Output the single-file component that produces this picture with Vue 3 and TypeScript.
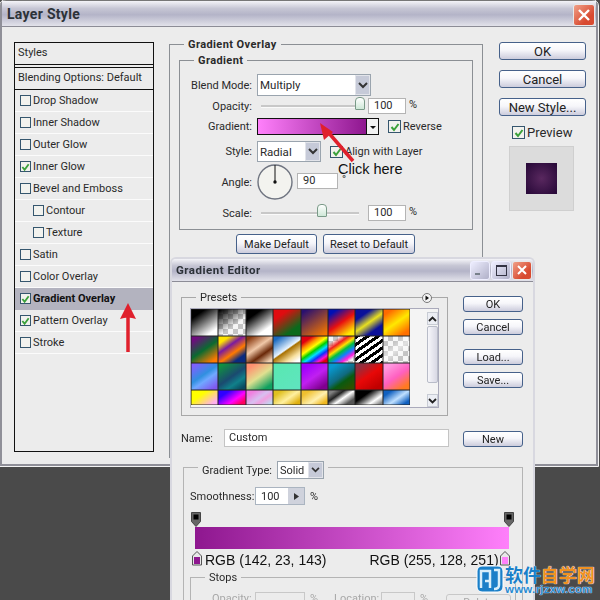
<script setup lang="ts">
interface StyleRow {
  label: string
  checked?: boolean
  nested?: boolean
  active?: boolean
}

const styleRows: StyleRow[] = [
  { label: 'Drop Shadow' },
  { label: 'Inner Shadow' },
  { label: 'Outer Glow' },
  { label: 'Inner Glow', checked: true },
  { label: 'Bevel and Emboss' },
  { label: 'Contour', nested: true },
  { label: 'Texture', nested: true },
  { label: 'Satin' },
  { label: 'Color Overlay' },
  { label: 'Gradient Overlay', checked: true, active: true },
  { label: 'Pattern Overlay', checked: true },
  { label: 'Stroke' },
]

const checker = 'repeating-conic-gradient(#c4c4c4 0 25%, #f6f6f6 0 50%) 0 0 / 10px 10px'

const swatches: string[] = [
  'linear-gradient(145deg,#000 22%,#fff 82%)',
  `linear-gradient(145deg,#000 5%,transparent 60%),${checker}`,
  'linear-gradient(145deg,#000 25%,#fff 75%)',
  'linear-gradient(145deg,#e00c10 25%,#0a6a1c 75%)',
  'linear-gradient(145deg,#2a1070 10%,#f07400 90%)',
  'linear-gradient(145deg,#0010b4 15%,#e81010 50%,#ffe800 85%)',
  'linear-gradient(145deg,#0a109a 25%,#e8e020 50%,#0a109a 75%)',
  'linear-gradient(145deg,#ff6a00 15%,#ffe800 50%,#ff7000 85%)',

  'linear-gradient(145deg,#700a80 12%,#0a6a30 50%,#ff7a00 88%)',
  'linear-gradient(145deg,#ffe400 18%,#7a1aa0 38%,#ff7a00 60%,#0a2a80 80%)',
  'linear-gradient(145deg,#8a3a10 10%,#f0c8a8 42%,#6a2808 66%,#f0d0b0 90%)',
  'linear-gradient(145deg,#1a6ac0 12%,#e8f4ff 48%,#a87000 52%,#f8e0a0 75%,#fff 90%)',
  'linear-gradient(145deg,#e00010 18%,#ff9000 30%,#ffff00 42%,#00d000 52%,#00e0ff 62%,#1030ff 72%,#ff10d0 82%,#e00010 90%)',
  `linear-gradient(145deg,transparent 18%,#f02020 32%,#ffe000 44%,#00c040 54%,#1080ff 66%,#ff20e0 78%,transparent 88%),${checker}`,
  'repeating-linear-gradient(145deg,#000 0 3px,#fff 3px 6px)',
  `linear-gradient(145deg,transparent 30%,rgba(255,255,255,.5) 50%,transparent 70%),${checker}`,

  'linear-gradient(145deg,#8060ff 10%,#3090e0 45%,#70a8ff 60%,#8058f0 90%)',
  'linear-gradient(145deg,#109040 10%,#1a4a70 50%,#10808a 70%,#0a4a60 90%)',
  'linear-gradient(145deg,#ff9070 15%,#e0e090 50%,#10a060 85%)',
  'linear-gradient(145deg,#58e8b0,#60e4c0)',
  'linear-gradient(145deg,#a000ff 15%,#c020f0 50%,#800090 85%)',
  'linear-gradient(145deg,#0898d0 15%,#106a80 50%,#0a5a10 65%,#305000 90%)',
  'linear-gradient(145deg,#903040 15%,#e80808 48%,#c00000 85%)',
  'linear-gradient(145deg,#ff98e0 15%,#ff60c0 50%,#ff7a20 85%)',

  'linear-gradient(145deg,#ffff00 35%,#ffb0f0 85%)',
  'linear-gradient(145deg,#3000ff 25%,#ff00ff 62%,#ff0060 85%)',
  `linear-gradient(145deg,#f080e0 20%,#d8c0f0 50%,#f0a0e0 65%,#c0d8f0 90%)`,
  'linear-gradient(145deg,#e0c020 20%,#fff0a0 55%,#e0b010 85%)',
  'linear-gradient(145deg,#f0c030 20%,#fff0b0 58%,#f0b820 85%)',
  'linear-gradient(145deg,#808080 15%,#222 35%,#fff 55%,#555 80%)',
  'linear-gradient(145deg,#000 35%,#fff 70%,#888 90%)',
  'linear-gradient(145deg,#1060c0 20%,#c0e0ff 55%,#1060c0 85%)',
]
</script>

<template>
  <div class="desktop">
    <!-- Layer Style window -->
    <section class="window layer-win">
      <header class="titlebar">
        <span class="title">Layer Style</span>
        <span class="close big">
          <svg width="14" height="14" viewBox="0 0 14 14"><path d="M2 2l10 10M12 2L2 12" stroke="#fff" stroke-width="2.4" /></svg>
        </span>
      </header>
      <div class="layer-body">
        <aside class="style-list">
          <div class="list-head">Styles</div>
          <div class="list-blend">Blending Options: Default</div>
          <div
            v-for="row in styleRows"
            :key="row.label"
            class="list-row"
            :class="{ nested: row.nested, active: row.active }"
          >
            <span class="check">
              <svg v-if="row.checked" width="10" height="10" viewBox="0 0 10 10"><path d="M1.5 5l2.5 3 4.5-6" fill="none" stroke="#3aa13a" stroke-width="2" /></svg>
            </span>
            {{ row.label }}
          </div>
        </aside>

        <div class="overlay-group">
          <span class="legend strong">Gradient Overlay</span>
          <div class="gradient-group">
            <span class="legend strong">Gradient</span>
            <div class="form-row r-blend">
              <label>Blend Mode:</label>
              <div class="select w-blend">
                <span>Multiply</span>
                <span class="drop"><svg width="10" height="7" viewBox="0 0 10 7"><path d="M1 1l4 4 4-4" fill="none" stroke="#333" stroke-width="2" /></svg></span>
              </div>
            </div>
            <div class="form-row r-opacity">
              <label>Opacity:</label>
              <div class="slider w-slide1"><i class="thumb" style="left: 94px"></i></div>
              <span class="num">100</span>
              <span class="pct">%</span>
            </div>
            <div class="form-row r-gradient">
              <label>Gradient:</label>
              <div class="grad-field">
                <span class="grad-fill"></span>
                <span class="grad-arrow"></span>
              </div>
              <span class="check reverse">
                <svg width="10" height="10" viewBox="0 0 10 10"><path d="M1.5 5l2.5 3 4.5-6" fill="none" stroke="#3aa13a" stroke-width="2" /></svg>
              </span>
              <span class="small">Reverse</span>
            </div>
            <div class="form-row r-style">
              <label>Style:</label>
              <div class="select w-style">
                <span>Radial</span>
                <span class="drop"><svg width="10" height="7" viewBox="0 0 10 7"><path d="M1 1l4 4 4-4" fill="none" stroke="#333" stroke-width="2" /></svg></span>
              </div>
              <span class="check align">
                <svg width="10" height="10" viewBox="0 0 10 10"><path d="M1.5 5l2.5 3 4.5-6" fill="none" stroke="#3aa13a" stroke-width="2" /></svg>
              </span>
              <span class="small">Align with Layer</span>
            </div>
            <div class="form-row r-angle">
              <label>Angle:</label>
              <svg class="dial" width="36" height="36" viewBox="0 0 36 36">
                <circle cx="18" cy="18" r="17" fill="#f3f3ef" stroke="#6f7480" stroke-width="1.4" />
                <path d="M18 18V1" stroke="#111" stroke-width="1" />
                <circle cx="18" cy="18" r="1.7" fill="#111" />
              </svg>
              <span class="num angle">90</span>
              <span class="deg">°</span>
            </div>
            <div class="form-row r-scale">
              <label>Scale:</label>
              <div class="slider w-slide2"><i class="thumb" style="left: 56px"></i></div>
              <span class="num">100</span>
              <span class="pct">%</span>
            </div>
          </div>
          <div class="default-btns">
            <button class="btn make" type="button">Make Default</button>
            <button class="btn reset" type="button">Reset to Default</button>
          </div>
        </div>

        <div class="side-col">
          <button class="btn side" type="button">OK</button>
          <button class="btn side" type="button">Cancel</button>
          <button class="btn side" type="button">New Style...</button>
          <div class="preview-row">
            <span class="check">
              <svg width="10" height="10" viewBox="0 0 10 10"><path d="M1.5 5l2.5 3 4.5-6" fill="none" stroke="#3aa13a" stroke-width="2" /></svg>
            </span>
            Preview
          </div>
          <div class="preview-box"><span class="preview-inner"></span></div>
        </div>
      </div>
    </section>

    <!-- Gradient Editor window -->
    <section class="window editor-win">
      <header class="titlebar small-bar">
        <span class="title">Gradient Editor</span>
        <span class="win-btns">
          <span class="wbtn"><i class="min"></i></span>
          <span class="wbtn"><i class="max"></i></span>
          <span class="close">
            <svg width="12" height="12" viewBox="0 0 12 12"><path d="M2 2l8 8M10 2l-8 8" stroke="#fff" stroke-width="2" /></svg>
          </span>
        </span>
      </header>
      <div class="editor-body">
        <div class="editor-top">
          <div class="presets">
            <span class="legend">Presets</span>
            <svg class="round-btn" width="10" height="10" viewBox="0 0 10 10">
              <circle cx="5" cy="5" r="4.500" fill="#f4f4f4" stroke="#777" />
              <path d="M3.500 2.500L7 5 3.500 7.500z" fill="#111" />
            </svg>
            <div class="preset-inner">
              <div class="swatch-grid">
                <span v-for="(bg, i) in swatches" :key="i" class="swatch" :style="{ background: bg }"></span>
              </div>
              <div class="scroll">
                <span class="scroll-btn"><svg width="9" height="6" viewBox="0 0 9 6"><path d="M1 5l3.5-3.5L8 5" fill="none" stroke="#222" stroke-width="1.8" /></svg></span>
                <span class="scroll-thumb"></span>
                <span class="scroll-btn down"><svg width="9" height="6" viewBox="0 0 9 6"><path d="M1 1l3.5 3.5L8 1" fill="none" stroke="#222" stroke-width="1.8" /></svg></span>
              </div>
            </div>
          </div>
          <div class="editor-side">
            <button class="btn eside" type="button">OK</button>
            <button class="btn eside" type="button">Cancel</button>
            <button class="btn eside load" type="button">Load...</button>
            <button class="btn eside" type="button">Save...</button>
          </div>
        </div>

        <div class="name-row">
          <label>Name:</label>
          <span class="name-input">Custom</span>
          <button class="btn eside new" type="button">New</button>
        </div>

        <div class="type-group">
          <div class="type-legend">
            <span>Gradient Type:</span>
            <div class="select w-type">
              <span>Solid</span>
              <span class="drop"><svg width="9" height="6" viewBox="0 0 10 7"><path d="M1 1l4 4 4-4" fill="none" stroke="#333" stroke-width="2" /></svg></span>
            </div>
          </div>
          <div class="smooth-row">
            <span class="smooth-label">Smoothness:</span>
            <div class="smooth-input">
              <span>100</span>
              <span class="stepper"><svg width="5" height="7" viewBox="0 0 5 7"><path d="M0 0l5 3.5L0 7z" fill="#333" /></svg></span>
            </div>
            <span>%</span>
          </div>
          <div class="stops-top">
            <svg v-for="n in 2" :key="n" width="10" height="15" viewBox="0 0 10 15"><path d="M.5.5h9v9L5 14.5.5 9.500z" fill="#666" stroke="#444" /><rect x="2.500" y="2.500" width="5" height="5" fill="#000" /></svg>
          </div>
          <div class="grad-bar"></div>
          <div class="stops-bottom">
            <svg width="10" height="15" viewBox="0 0 10 15"><path d="M5 .5L9.500 5v9h-9V5z" fill="#e8e8e8" stroke="#555" /><rect x="2" y="6" width="6" height="7" fill="#8e178f" /></svg>
            <span class="rgb">RGB (142, 23, 143)</span>
            <span class="rgb right">RGB (255, 128, 251)</span>
            <svg width="10" height="15" viewBox="0 0 10 15"><path d="M5 .5L9.500 5v9h-9V5z" fill="#e8e8e8" stroke="#555" /><rect x="2" y="6" width="6" height="7" fill="#ff80fb" /></svg>
          </div>
          <div class="stops-group">
            <span class="legend">Stops</span>
            <div class="stops-row">
              <span class="opa">Opacity:</span>
              <span class="dis-input o"></span>
              <span class="dis-pct">%</span>
              <span class="loc">Location:</span>
              <span class="dis-input l"></span>
              <span class="dis-pct">%</span>
              <span class="delete">Delete</span>
            </div>
          </div>
        </div>
      </div>
    </section>

    <!-- annotations drawn over the windows -->
    <span class="click-here">Click here</span>
    <svg class="arrows" width="600" height="600" viewBox="0 0 600 600">
      <path d="M353 161L328 132" stroke="#e0202c" stroke-width="3.500" />
      <path d="M320 123l13 9-9 8z" fill="#e0202c" />
      <path d="M128 352V316" stroke="#e0202c" stroke-width="3.500" />
      <path d="M128 303l8 16q-8-3-16 0z" fill="#e0202c" />
    </svg>

    <div class="watermark">
      <svg width="28" height="28" viewBox="0 0 28 28">
        <rect x="1" y="1" width="26" height="26" rx="5" fill="#1a7fc8" stroke="#fff" />
        <path d="M5 23V6h9v10H9M14 23V11M18 5h5v15c0 3-2 4-5 4" fill="none" stroke="#d8eefa" stroke-width="2.500" />
      </svg>
      <div class="wm-text">
        <div class="wm-name"><span class="blue">软件</span><span class="orange">自学网</span></div>
        <div class="wm-url">www.rjzxw.com</div>
      </div>
    </div>
  </div>
</template>

<style scoped>
.desktop {
  position: relative;
  width: 600px;
  height: 600px;
  overflow: hidden;
  background: #4a4a4a;
  font-family: Roboto, "Liberation Sans", Arial, sans-serif;
  font-size: 11px;
  letter-spacing: 0;
  color: #2a2a2a;
}

.window {
  position: absolute;
  box-sizing: border-box;
  background: #ececec;
}

.layer-win {
  left: 0;
  top: 0;
  width: 598px;
  height: 466px;
  border: 2px solid #8f8f98;
  border-top: 1px solid #777;
  border-radius: 6px 6px 0 0;
  outline: 1px solid #f4f4f4;
}

.editor-win {
  left: 170px;
  top: 257px;
  width: 365px;
  height: 343px;
  border: 2px solid #d8d8e0;
  border-bottom: 0;
  border-radius: 6px 6px 0 0;
  overflow: hidden;
  filter: blur(0.35px);
}

.titlebar {
  box-sizing: border-box;
  height: 26px;
  display: flex;
  align-items: center;
  justify-content: space-between;
  padding: 0 1px 0 5px;
  border-bottom: 1px solid #8c8c96;
  background: linear-gradient(#f4f4f8 0, #c6c6d4 30%, #b4b4c8 55%, #e2e2ea 100%);
}

.small-bar {
  height: 23px;
  padding: 0 1px 0 4px;
}

.title {
  font-size: 14px;
  font-weight: 700;
  letter-spacing: 0.3px;
  color: #2c3238;
}

.small-bar .title {
  font-size: 11.5px;
  letter-spacing: 0.5px;
}

.close {
  width: 18px;
  height: 17px;
  display: flex;
  align-items: center;
  justify-content: center;
  border-radius: 3px;
  border: 1px solid #e8e8e8;
  background: linear-gradient(135deg, #f0a088, #d84a30 70%);
}

.close.big {
  width: 20px;
  height: 20px;
  margin-top: 3px;
}

.win-btns {
  display: flex;
  gap: 1px;
}

.wbtn {
  width: 18px;
  height: 17px;
  display: flex;
  align-items: center;
  justify-content: center;
  border-radius: 3px;
  border: 1px solid #eef;
  background: linear-gradient(135deg, #eef, #b0b0c8);
}

.wbtn .min {
  width: 5px;
  height: 2px;
  margin: 7px 6px 0 0;
  background: #77808a;
}

.wbtn .max {
  width: 9px;
  height: 8px;
  border: 1px solid #334;
  border-top-width: 2px;
}

.layer-body {
  display: flex;
  align-items: flex-start;
  padding: 15px 0 0 12px;
}

/* left column with the effect list */
.style-list {
  box-sizing: border-box;
  width: 140px;
  height: 410px;
  flex: none;
  border: 1px solid #111;
}

.list-head {
  height: 21px;
  line-height: 19px;
  padding-left: 3px;
  border-bottom: 1px solid #111;
}

.list-blend {
  height: 21px;
  line-height: 20px;
  padding-left: 3px;
  border-top: 1px solid #111;
  border-bottom: 1px solid #111;
  margin-top: 2px;
}

.list-row {
  box-sizing: border-box;
  height: 22px;
  display: flex;
  align-items: center;
  gap: 2px;
  padding-left: 5px;
  border-bottom: 1px solid #fbfbfb;
}

.list-row.nested {
  padding-left: 18px;
}

.list-row.active {
  background: #b3b3bf;
  font-weight: 700;
  color: #111;
  border-bottom-color: #b3b3bf;
}

.check {
  box-sizing: border-box;
  width: 11px;
  height: 11px;
  flex: none;
  display: inline-flex;
  align-items: center;
  justify-content: center;
  border: 1px solid #35566e;
  background: #f2f2ee;
}

.legend {
  position: absolute;
  top: -7px;
  left: 14px;
  padding: 0 4px;
  background: #ececec;
  line-height: 13px;
}

.legend.strong {
  font-weight: 700;
  letter-spacing: 0.4px;
}

.overlay-group {
  position: relative;
  box-sizing: border-box;
  width: 314px;
  height: 414px;
  flex: none;
  margin: 2px 0 0 15px;
  padding: 15px 9px 0;
  border: 1px solid #8b8f94;
  border-bottom: 0;
}

.gradient-group {
  position: relative;
  box-sizing: border-box;
  height: 170px;
  border: 1px solid #8b8f94;
  padding-top: 13px;
}

.form-row {
  display: flex;
  align-items: center;
}

.form-row label {
  width: 72px;
  flex: none;
  text-align: right;
  margin-right: 5px;
}

.r-blend { height: 22px; }
.r-opacity { height: 16px; margin-top: 2px; }
.r-gradient { height: 17px; margin-top: 4px; }
.r-style { height: 21px; margin-top: 6px; }
.r-angle { height: 36px; margin-top: 2px; }
.r-scale { height: 16px; margin-top: 5px; }

.select {
  box-sizing: border-box;
  display: flex;
  align-items: center;
  justify-content: space-between;
  height: 100%;
  padding-left: 2px;
  background: #fff;
  border: 1px solid #9aa4ae;
}

.w-blend { width: 114px; font-size: 11.5px; }
.w-style { width: 64px; font-size: 11.5px; }

.drop {
  width: 15px;
  align-self: stretch;
  display: flex;
  align-items: center;
  justify-content: center;
  background: #c6cad8;
  box-shadow: inset 0 0 0 1px #e2e4ea;
}

.slider {
  position: relative;
  height: 2px;
  margin-left: 4px;
  background: #c8c8c8;
  border-bottom: 1px solid #fafafa;
}

.w-slide1 { width: 102px; margin-right: 5px; }
.w-slide2 { width: 98px; margin-right: 9px; }

.thumb {
  position: absolute;
  top: -8px;
  width: 8px;
  height: 11px;
  border: 1px solid #7a9a88;
  border-radius: 4px 4px 1px 1px;
  background: linear-gradient(#fff, #cfe8d8);
}

.num {
  box-sizing: border-box;
  width: 38px;
  height: 16px;
  line-height: 14px;
  padding-left: 5px;
  background: #fff;
  border: 1px solid #b4b4b4;
}

.pct {
  margin: -4px 0 0 3px;
}

.grad-field {
  box-sizing: border-box;
  width: 122px;
  height: 100%;
  display: flex;
  flex: none;
  border: 1px solid #111;
}

.grad-fill {
  flex: 1;
  background: linear-gradient(90deg, #ff80fb, #8e178f);
}

.grad-arrow {
  position: relative;
  width: 11px;
  background: #f2f2f2;
  border-left: 1px solid #111;
}

.grad-arrow::after {
  content: "";
  position: absolute;
  left: 3px;
  top: 7px;
  border: 3px solid transparent;
  border-top: 3px solid #111;
}

.reverse {
  margin: 0 2px 0 9px;
  width: 13px;
  height: 13px;
}

.small {
  font-size: 11px;
}

.align {
  margin: 0 2px 0 9px;
  width: 13px;
  height: 12px;
}

.dial {
  margin-left: 0;
  flex: none;
}

.angle {
  width: 41px;
  margin: -2px 0 0 4px;
}

.deg {
  margin: -6px 0 0 4px;
}

.default-btns {
  display: flex;
  gap: 6px;
  margin: 4px 0 0 57px;
}

.btn {
  box-sizing: border-box;
  padding: 0;
  font: inherit;
  letter-spacing: inherit;
  color: #222;
  border: 1px solid #46618a;
  border-radius: 3px;
  background: linear-gradient(#fff 0, #f6f6fa 45%, #ccccdc 100%);
}

.make { width: 81px; height: 20px; }
.reset { width: 92px; height: 20px; }

.side-col {
  width: 88px;
  flex: none;
  margin-left: 16px;
  display: flex;
  flex-direction: column;
  gap: 10px;
}

.side {
  height: 18px;
  width: 87px;
  font-size: 13px;
}

.preview-row {
  display: flex;
  align-items: center;
  gap: 2px;
  font-size: 13px;
  margin: 0 0 0 13px;
  line-height: 13px;
}

.preview-row .check {
  width: 13px;
  height: 13px;
}

.preview-box {
  box-sizing: border-box;
  width: 65px;
  height: 65px;
  margin: -3px 0 0 10px;
  display: flex;
  align-items: center;
  justify-content: center;
  background: #dcdcdc;
  border: 1px solid #cfcfcf;
}

.preview-inner {
  width: 31px;
  height: 31px;
  background: radial-gradient(circle, #59285f, #2a0a3a 90%);
}

/* gradient editor */
.editor-body {
  padding: 15px 0 0 9px;
}

.editor-top {
  display: flex;
  align-items: flex-start;
}

.presets {
  position: relative;
  box-sizing: border-box;
  width: 267px;
  height: 119px;
  flex: none;
  padding: 10px 8px 0 8px;
  border: 1px solid #a8a8a8;
}

.round-btn {
  position: absolute;
  top: -5px;
  right: 15px;
}

.preset-inner {
  display: flex;
  height: 98px;
  background: #f4f4f4;
  border: 1px solid #aab;
  margin-right: 0;
}

.swatch-grid {
  width: 219px;
  height: 96px;
  flex: none;
  display: grid;
  grid-template-columns: repeat(8, 1fr);
  grid-template-rows: 27px 27px 27px 15px;
  overflow: hidden;
  background: #222;
}

.swatch {
  display: block;
  box-shadow: inset 0 0 0 0.5px #222;
}

.scroll {
  width: 13px;
  margin: 3px 0 0 17px;
  display: flex;
  flex-direction: column;
}

.scroll-btn {
  height: 11px;
  display: flex;
  align-items: center;
  justify-content: center;
  border: 1px solid #c8ccd4;
  background: #eceef4;
}

.scroll-btn.down {
  margin-top: 11px;
}

.scroll-thumb {
  height: 55px;
  margin-top: 1px;
  border: 1px solid #b8bcc8;
  border-radius: 2px;
  background: linear-gradient(90deg, #f6f6fa, #d8d8e4);
}

.editor-side {
  display: flex;
  flex-direction: column;
  gap: 7px;
  margin: -1px 0 0 15px;
}

.eside {
  width: 60px;
  height: 16px;
  line-height: 13px;
}

.load {
  margin-top: 7px;
}

.name-row {
  display: flex;
  align-items: center;
  margin-top: 13px;
}

.name-row label {
  width: 43px;
  flex: none;
}

.name-input {
  box-sizing: border-box;
  width: 225px;
  height: 18px;
  line-height: 16px;
  padding-left: 4px;
  background: #fff;
  border: 1px solid #c4c4c4;
}

.new {
  margin: 2px 0 0 14px;
}

.type-group {
  position: relative;
  box-sizing: border-box;
  width: 340px;
  height: 170px;
  margin: 20px 0 0 2px;
  padding: 0 6px;
  border: 1px solid #b4b4b4;
  border-bottom: 0;
}

.type-legend {
  position: absolute;
  left: 14px;
  top: -7px;
  height: 18px;
  display: flex;
  align-items: center;
  gap: 5px;
  padding: 0 4px;
  background: #ececec;
}

.w-type {
  width: 47px;
  height: 18px;
}

.smooth-row {
  display: flex;
  align-items: center;
  gap: 5px;
  padding: 19px 0 0 0;
}

.smooth-label {
  width: 60px;
  flex: none;
}

.smooth-input {
  box-sizing: border-box;
  width: 50px;
  height: 18px;
  display: flex;
  align-items: center;
  justify-content: space-between;
  padding-left: 5px;
  background: #fff;
  border: 1px solid #aab4c0;
}

.stepper {
  width: 16px;
  align-self: stretch;
  display: flex;
  align-items: center;
  justify-content: center;
  background: #cfd2dc;
}

.stops-top {
  display: flex;
  justify-content: space-between;
  margin: 7px 1px 0 0;
  padding: 0 1px;
  height: 15px;
}

.grad-bar {
  width: 314px;
  height: 22px;
  margin-left: 5px;
  background: linear-gradient(90deg, #8e178f, #ff80fb);
}

.stops-bottom {
  display: flex;
  align-items: flex-start;
  margin-top: 2px;
  padding-left: 2px;
}

.rgb {
  font-family: "Liberation Sans", Arial, sans-serif;
  font-size: 14px;
  line-height: 16px;
  letter-spacing: 0;
  margin: 1px 0 0 3px;
  color: #111;
}

.rgb.right {
  margin-left: 43px;
  margin-right: 1px;
}

.stops-group {
  position: relative;
  box-sizing: border-box;
  height: 60px;
  margin: 9px 0 0 0;
  width: 326px;
  border: 1px solid #b4b4b4;
  border-bottom: 0;
}

.stops-row {
  display: flex;
  align-items: flex-start;
  padding: 14px 0 0 21px;
  color: #a8a8a8;
}

.opa {
  width: 43px;
  flex: none;
}

.dis-input {
  height: 16px;
  box-sizing: border-box;
  flex: none;
  border: 1px solid #c8c8c8;
}

.dis-input.o { width: 50px; }
.dis-input.l { width: 34px; }

.dis-pct {
  margin-left: 5px;
}

.loc {
  width: 47px;
  margin-left: 16px;
  flex: none;
}

.delete {
  margin: 2px 0 0 18px;
  padding: 1px 16px;
  border: 1px solid #c8c8c8;
  border-radius: 3px;
}

.click-here {
  position: absolute;
  left: 338px;
  top: 161px;
  font-family: "Liberation Sans", Arial, sans-serif;
  font-size: 14.5px;
  line-height: 16px;
  letter-spacing: 0;
  color: #111;
}

.arrows {
  position: absolute;
  left: 0;
  top: 0;
  pointer-events: none;
}

.watermark {
  position: absolute;
  left: 476px;
  top: 565px;
  display: flex;
  gap: 1px;
}

.wm-text {
  display: flex;
  flex-direction: column;
}

.wm-name {
  font-family: "Noto Sans CJK SC", sans-serif;
  font-size: 18px;
  font-weight: 700;
  line-height: 19px;
  letter-spacing: 0;
  white-space: nowrap;
  text-shadow: 0 0 1px #fff, 0 0 1px #fff;
}

.blue {
  color: #1a7fc8;
}

.orange {
  color: #f09020;
}

.wm-url {
  font-family: "Liberation Sans", sans-serif;
  font-size: 11.5px;
  font-weight: 700;
  line-height: 10px;
  letter-spacing: 0.2px;
  color: #2a8ad0;
  text-shadow: 0 0 1px #fff, 0 0 1px #fff;
}
</style>

<style>
html,
body {
  background: #4a4a4a;
}
</style>
